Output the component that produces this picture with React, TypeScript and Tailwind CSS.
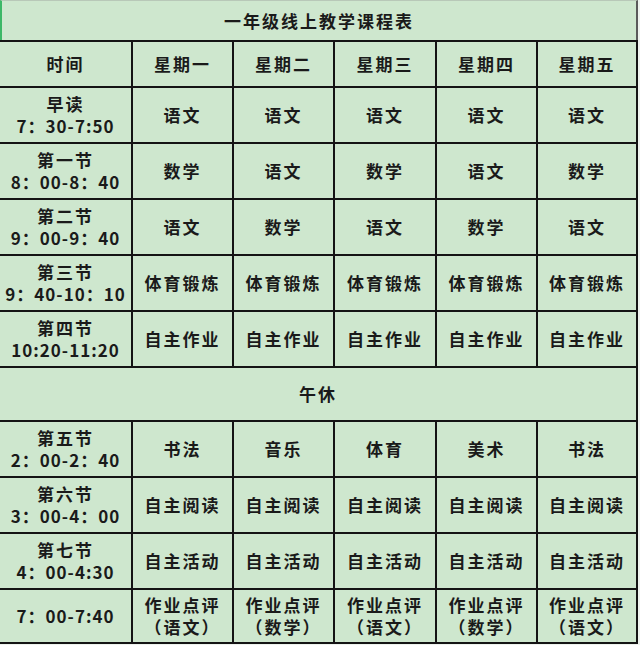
const days = ["星期一", "星期二", "星期三", "星期四", "星期五"];

type Row = { name?: string; time: string; h: string; cells: string[][] };

const morning: Row[] = [
  { name: "早读", time: "7：30-7:50", h: "h-[54px]", cells: [["语文"], ["语文"], ["语文"], ["语文"], ["语文"]] },
  { name: "第一节", time: "8：00-8：40", h: "h-[54px]", cells: [["数学"], ["语文"], ["数学"], ["语文"], ["数学"]] },
  { name: "第二节", time: "9：00-9：40", h: "h-[54px]", cells: [["语文"], ["数学"], ["语文"], ["数学"], ["语文"]] },
  { name: "第三节", time: "9：40-10：10", h: "h-[54px]", cells: [["体育锻炼"], ["体育锻炼"], ["体育锻炼"], ["体育锻炼"], ["体育锻炼"]] },
  { name: "第四节", time: "10:20-11:20", h: "h-[54px]", cells: [["自主作业"], ["自主作业"], ["自主作业"], ["自主作业"], ["自主作业"]] },
];

const afternoon: Row[] = [
  { name: "第五节", time: "2：00-2：40", h: "h-[54px]", cells: [["书法"], ["音乐"], ["体育"], ["美术"], ["书法"]] },
  { name: "第六节", time: "3：00-4：00", h: "h-[54px]", cells: [["自主阅读"], ["自主阅读"], ["自主阅读"], ["自主阅读"], ["自主阅读"]] },
  { name: "第七节", time: "4：00-4:30", h: "h-[54px]", cells: [["自主活动"], ["自主活动"], ["自主活动"], ["自主活动"], ["自主活动"]] },
  {
    time: "7：00-7:40",
    h: "h-[52px]",
    cells: [
      ["作业点评", "（语文）"],
      ["作业点评", "（数学）"],
      ["作业点评", "（语文）"],
      ["作业点评", "（数学）"],
      ["作业点评", "（语文）"],
    ],
  },
];

function Cell({ lines, h }: { lines: string[]; h: string }) {
  return (
    <div className={`${h} bg-[#cee7ce] flex flex-col items-center justify-center leading-[22px]`}>
      {lines.map((l, i) => (
        <span key={i} className="tracking-[2px]">
          {l}
        </span>
      ))}
    </div>
  );
}

function Rows({ rows }: { rows: Row[] }) {
  return (
    <>
      {rows.map((r, i) => (
        <div key={i} className="contents">
          <div className={`${r.h} bg-[#cee7ce] flex flex-col items-center justify-center leading-[22px]`}>
            {r.name && <span className="tracking-[2px]">{r.name}</span>}
            <span className="tracking-[1px]">{r.time}</span>
          </div>
          {r.cells.map((c, j) => (
            <Cell key={j} lines={c} h={r.h} />
          ))}
        </div>
      ))}
    </>
  );
}

export default function App() {
  return (
    <div
      className="w-[640px] h-[645px] bg-[#eef3ee] text-[17px] font-bold text-[#1a1a1a]"
      style={{ fontFamily: '"Noto Sans CJK SC", "Noto Sans", sans-serif' }}
    >
      <div className="w-[638px] h-[40px] bg-[#cee7ce] border-t border-[#b8c8b8] border-l-2 border-l-[#3cb867] border-r-2 border-r-[#5a5a5a] flex items-center justify-center tracking-[2px]">
        一年级线上教学课程表
      </div>
      <div className="w-[638px] bg-[#141414] grid grid-cols-[131px_99px_99px_100px_99px_98px] gap-[2px] pt-[2px] pr-[2px] pb-[2px]">
        <Cell lines={["时间"]} h="h-[44px]" />
        {days.map((d) => (
          <Cell key={d} lines={[d]} h="h-[44px]" />
        ))}
        <Rows rows={morning} />
        <div className="col-span-6 h-[52px] bg-[#cee7ce] flex items-center justify-center tracking-[2px]">
          午休
        </div>
        <Rows rows={afternoon} />
      </div>
    </div>
  );
}
